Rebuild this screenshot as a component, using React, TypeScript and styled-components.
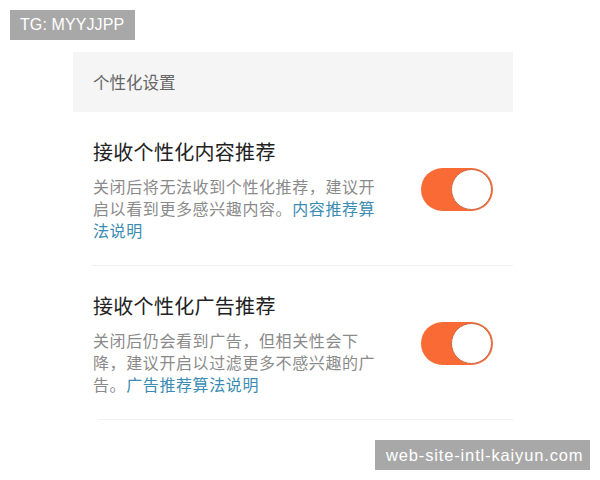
import React from 'react';
import styled, { createGlobalStyle } from 'styled-components';

const GlobalStyle = createGlobalStyle`
  html, body {
    margin: 0;
    padding: 0;
    background: #ffffff;
  }
  body {
    font-family: "Noto Sans CJK SC", "Noto Sans", sans-serif;
  }
`;

const rows = [
  {
    title: '接收个性化内容推荐',
    text: '关闭后将无法收到个性化推荐，建议开启以看到更多感兴趣内容。',
    link: '内容推荐算法说明',
  },
  {
    title: '接收个性化广告推荐',
    text: '关闭后仍会看到广告，但相关性会下降，建议开启以过滤更多不感兴趣的广告。',
    link: '广告推荐算法说明',
  },
];

function App() {
  return (
    <Page>
      <GlobalStyle />
      <Badge className='top'>TG: MYYJJPP</Badge>
      <Panel>
        <Header>个性化设置</Header>
        {rows.map((row, i) => (
          <Row key={row.title} $shift={i === 1}>
            <TextCol>
              <Title>{row.title}</Title>
              <Desc>
                {row.text}
                <Link>{row.link}</Link>
              </Desc>
            </TextCol>
            <Toggle>
              <Knob />
            </Toggle>
          </Row>
        ))}
      </Panel>
      <Badge className='bottom'>web-site-intl-kaiyun.com</Badge>
    </Page>
  );
}

const Page = styled.div`
  position: relative;
  width: 600px;
  height: 480px;
  overflow: hidden;
  padding-top: 52px;
  box-sizing: border-box;
`;

const Badge = styled.div`
  position: absolute;
  height: 30px;
  line-height: 30px;
  background: #a8a8a8;
  color: #ffffff;
  font-family: "Liberation Sans", Arial, sans-serif;
  font-size: 16px;
  box-sizing: border-box;
  white-space: nowrap;

  &.top {
    left: 10px;
    top: 10px;
    width: 125px;
    padding-left: 10px;
    letter-spacing: 0.1px;
  }

  &.bottom {
    left: 375px;
    top: 440px;
    width: 215px;
    padding-left: 11px;
    font-size: 16.5px;
    letter-spacing: 0.85px;
  }
`;

const Panel = styled.div`
  margin-left: 73px;
  width: 440px;
`;

const Header = styled.div`
  height: 60px;
  line-height: 60px;
  padding-left: 20px;
  background: #f5f5f5;
  color: #666666;
  font-size: 16.5px;
`;

const Row = styled.div<{ $shift?: boolean }>`
  display: flex;
  align-items: center;
  justify-content: space-between;
  padding: 26px 20px 26px 20px;
  height: 154px;
  box-sizing: border-box;
  position: relative;

  &::after {
    content: '';
    position: absolute;
    left: ${(p) => (p.$shift ? '25px' : '19px')};
    right: 0;
    bottom: 0;
    height: 1px;
    background: #f0f0f0;
  }
`;

const TextCol = styled.div`
  display: flex;
  flex-direction: column;
  gap: 9px;
  width: 286px;
`;

const Title = styled.div`
  font-size: 20px;
  line-height: 28px;
  color: #222222;
  letter-spacing: 0.3px;
`;

const Desc = styled.div`
  font-size: 16px;
  line-height: 22px;
  letter-spacing: 0.6px;
  color: #8a8a8a;
`;

const Link = styled.span`
  color: #3a8cb2;
`;

const Toggle = styled.div`
  width: 72px;
  height: 43px;
  border-radius: 22px;
  background: #f96a35;
  display: flex;
  align-items: center;
  justify-content: flex-end;
  flex-shrink: 0;
  box-sizing: border-box;
  padding-right: 1px;
`;

const Knob = styled.div`
  width: 41px;
  height: 41px;
  border-radius: 50%;
  background: #ffffff;
  border: 1.5px solid #c76a48;
  box-sizing: border-box;
`;

export default App;
